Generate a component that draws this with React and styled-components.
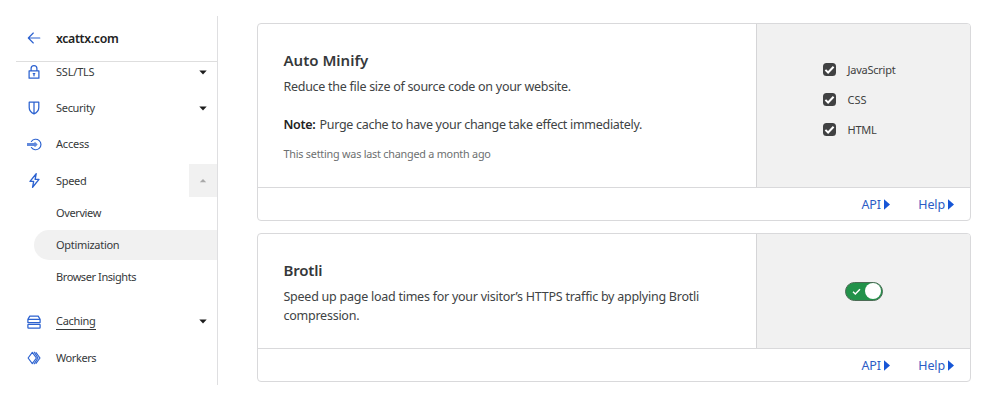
import React from "react";
import styled, { createGlobalStyle } from "styled-components";

const GlobalStyle = createGlobalStyle`
  * { box-sizing: border-box; }
  body {
    margin: 0;
    background: #fff;
    color: #36393a;
    font-family: "Noto Sans", "Open Sans", sans-serif;
  }
`;

const Page = styled.div`
  display: flex;
  width: 1000px;
  height: 400px;
  padding: 16px 0 0 16px;
  overflow: hidden;
`;

const Sidebar = styled.nav`
  width: 202px;
  height: 369px;
  border-right: 1px solid #dfdfe1;
`;

const SiteHeader = styled.header`
  display: flex;
  align-items: center;
  height: 46px;
  padding-bottom: 1px;
  border-bottom: 1px solid #dedede;
`;

const IconSlot = styled.span`
  display: flex;
  justify-content: center;
  width: 36px;
  margin-right: 4px;
  svg { display: block; }
`;

const SiteName = styled.span`
  font-size: 12.3px;
  font-weight: 600;
  letter-spacing: -0.35px;
  color: #222;
`;

const NavClip = styled.div`
  height: 323px;
  overflow: hidden;
`;

const NavList = styled.div`
  margin-top: -8px;
`;

const NavRow = styled.div`
  display: flex;
  align-items: center;
  height: 36.2px;
`;

const NavLabel = styled.span`
  font-size: 11px;
  line-height: 16px;
  letter-spacing: ${(p) => p.$track ?? -0.3}px;
  border-bottom: ${(p) => (p.$underlined ? "1px solid #36393a" : "0")};
`;

const Expander = styled.span`
  display: flex;
  align-items: center;
  justify-content: center;
  width: 28px;
  height: 33px;
  margin-left: auto;
  background: ${(p) => (p.$open ? "#f1f1f1" : "transparent")};
`;

const SubList = styled.div`
  margin-top: -1px;
  padding-bottom: 9px;
`;

const SubRow = styled.div`
  display: flex;
  align-items: center;
  height: 30px;
  margin: 0 0 2.3px 18px;
  padding-left: 22px;
  border-radius: 15px 0 0 15px;
  background: ${(p) => (p.$active ? "#f1f1f1" : "transparent")};
`;

const Main = styled.main`
  display: flex;
  flex-direction: column;
  gap: 12px;
  width: 714px;
  margin: 7px 0 0 39px;
`;

const Card = styled.section`
  display: flex;
  flex-direction: column;
  height: ${(p) => p.$height}px;
  border: 1px solid #d9d9db;
  border-radius: 4px;
  overflow: hidden;
`;

const CardBody = styled.div`
  display: flex;
  flex: 1;
`;

const CardText = styled.div`
  width: 498px;
  padding: 25px 0 0 25.5px;
`;

const CardControl = styled.div`
  display: flex;
  flex: 1;
  flex-direction: column;
  align-items: ${(p) => (p.$centered ? "center" : "flex-start")};
  justify-content: center;
  padding: ${(p) => (p.$centered ? "0" : "0 0 12px 65.5px")};
  border-left: 1px solid #d5d5d7;
  background: #f1f1f1;
`;

const CardTitle = styled.h2`
  margin: 0 0 5.5px;
  font-size: 15px;
  line-height: 22px;
  font-weight: 600;
  letter-spacing: ${(p) => p.$track ?? 0}px;
  color: #35383a;
`;

const Copy = styled.p`
  margin: 0 0 ${(p) => p.$gap || 0}px;
  font-size: 12.5px;
  line-height: 19px;
  white-space: nowrap;
  letter-spacing: ${(p) => p.$track ?? -0.28}px;
  color: #404344;
  b { margin-right: 1px; font-weight: 600; color: #222; }
`;

const Changed = styled.p`
  margin: 0;
  font-size: 10.8px;
  line-height: 18px;
  letter-spacing: -0.22px;
  color: #6d6f70;
`;

const CardFooter = styled.footer`
  display: flex;
  align-items: center;
  justify-content: flex-end;
  gap: 28.5px;
  height: 33px;
  padding-right: 16px;
  border-top: 1px solid #d9d9db;
`;

const FooterLink = styled.a`
  display: flex;
  align-items: center;
  gap: 3px;
  font-size: 12.5px;
  letter-spacing: -0.15px;
  color: #2c5cc5;
`;

const CheckRow = styled.label`
  display: flex;
  align-items: center;
  gap: 12px;
  height: 30px;
  font-size: 11px;
  letter-spacing: ${(p) => p.$track ?? -0.25}px;
  color: #404040;
`;

const CheckBox = styled.span`
  display: flex;
  width: 13px;
  height: 13px;
  border-radius: 3.5px;
  background: #404142;
`;

const Switch = styled.span`
  display: flex;
  align-items: center;
  justify-content: space-between;
  width: 38px;
  height: 19px;
  padding: 0 0.5px 0 5px;
  border: 1px solid #4c6b55;
  border-radius: 10px;
  background: #22924a;
`;

const Knob = styled.span`
  width: 16px;
  height: 16px;
  border-radius: 50%;
  background: #fff;
`;

const Line = ({ size = 14, width = 1.25, children }) => (
  <svg width={size} height={size} viewBox="0 0 14 14" fill="none" stroke="#2c62d0"
    strokeWidth={width} strokeLinejoin="round" strokeLinecap="round">
    {children}
  </svg>
);

const icons = {
  back: <Line width={1.15}><path d="M12.8 7H1.4M6.3 2 1.3 7l5 5" /></Line>,
  lock: (
    <Line>
      <path d="M2.1 5.8h9.8v7.4H2.1zM4.1 5.8V3.6a2.9 2.9 0 0 1 5.8 0v2.2" />
      <path d="M7 8.6v2.2M6.2 8.6h1.6" />
    </Line>
  ),
  shield: <Line><path d="M2.2 1.2h9.6v5.3c0 3-1.8 5-4.8 6.4-3-1.4-4.8-3.4-4.8-6.4zM7 1.2v11.6" /></Line>,
  access: (
    <Line size={15} width={1.1}>
      <path d="M4.1 4.2a4.9 4.9 0 1 1 0 5.6" />
      <path d="M.4 6.1h7.3M.4 7.9h7.3M.4 7h8.6M7.4 5.2 9.2 7 7.4 8.8" strokeOpacity=".75" />
    </Line>
  ),
  bolt: <Line size={15}><path d="M8.6.7 2.8 7.8h3.4L5.2 13.3l6-7.3H7.6z" /></Line>,
  cache: (
    <Line>
      <path d="M.9 4.3 2.8 1.1h8.4l1.9 3.2v3.2H.9zM.9 4.4h12.2" />
      <rect x=".9" y="9.4" width="12.2" height="3.6" rx=".6" />
    </Line>
  ),
  workers: (
    <Line width={1.15}>
      <path d="M5.3 1.4 1.1 7l4.2 5.6L9.4 7zM7.2 1.2 11 7l-3.8 5.8M9 1.6 13 7l-4 5.4" />
    </Line>
  ),
};

const Caret = ({ up }) => (
  <svg width="8" height="5" viewBox="0 0 8 5">
    <path d={up ? "M.8 4.2h6.4L4 1z" : "M.3.5h7.4L4 4.5z"} fill={up ? "#a9a9a9" : "#1d1d1d"} />
  </svg>
);

const Play = () => (
  <svg width="6" height="11" viewBox="0 0 6 11">
    <path d="M0 .3v10.4L6 5.5z" fill="#1656d6" />
  </svg>
);

const Tick = ({ size, width }) => (
  <svg width={size} height={size} viewBox="0 0 13 13" fill="none" stroke="#fff" strokeWidth={width}>
    <path d="M2.4 6.9 5.1 9.5 10.6 3.7" />
  </svg>
);

const NavItem = ({ icon, label, track, expand, underlined }) => (
  <NavRow>
    <IconSlot>{icons[icon]}</IconSlot>
    <NavLabel $track={track} $underlined={underlined}>{label}</NavLabel>
    {expand && <Expander $open={expand === "open"}><Caret up={expand === "open"} /></Expander>}
  </NavRow>
);

const SubItem = ({ label, track, active }) => (
  <SubRow $active={active}><NavLabel $track={track}>{label}</NavLabel></SubRow>
);

const CheckItem = ({ label, track }) => (
  <CheckRow $track={track}>
    <CheckBox><Tick size={13} width={2} /></CheckBox>
    {label}
  </CheckRow>
);

const FooterLinks = () => (
  <CardFooter>
    <FooterLink>API<Play /></FooterLink>
    <FooterLink>Help<Play /></FooterLink>
  </CardFooter>
);

export default function App() {
  return (
    <Page>
      <GlobalStyle />
      <Sidebar>
        <SiteHeader>
          <IconSlot>{icons.back}</IconSlot>
          <SiteName>xcattx.com</SiteName>
        </SiteHeader>
        <NavClip>
          <NavList>
            <NavItem icon="lock" label="SSL/TLS" track={-0.2} expand="closed" />
            <NavItem icon="shield" label="Security" expand="closed" />
            <NavItem icon="access" label="Access" track={-0.2} />
            <NavItem icon="bolt" label="Speed" expand="open" />
            <SubList>
              <SubItem label="Overview" track={-0.38} />
              <SubItem label="Optimization" active />
              <SubItem label="Browser Insights" track={-0.42} />
            </SubList>
            <NavItem icon="cache" label="Caching" expand="closed" underlined />
            <NavItem icon="workers" label="Workers" track={-0.42} />
          </NavList>
        </NavClip>
      </Sidebar>
      <Main>
        <Card $height={198}>
          <CardBody>
            <CardText>
              <CardTitle>Auto Minify</CardTitle>
              <Copy $gap={19}>Reduce the file size of source code on your website.</Copy>
              <Copy $gap={11} $track={-0.295}><b>Note:</b> Purge cache to have your change take effect immediately.</Copy>
              <Changed>This setting was last changed a month ago</Changed>
            </CardText>
            <CardControl>
              <CheckItem label="JavaScript" />
              <CheckItem label="CSS" track={0} />
              <CheckItem label="HTML" />
            </CardControl>
          </CardBody>
          <FooterLinks />
        </Card>
        <Card $height={149}>
          <CardBody>
            <CardText>
              <CardTitle $track={-0.2}>Brotli</CardTitle>
              <Copy $track={-0.25}>Speed up page load times for your visitor’s HTTPS traffic by applying Brotli<br />compression.</Copy>
            </CardText>
            <CardControl $centered>
              <Switch><Tick size={11} width={1.7} /><Knob /></Switch>
            </CardControl>
          </CardBody>
          <FooterLinks />
        </Card>
      </Main>
    </Page>
  );
}
